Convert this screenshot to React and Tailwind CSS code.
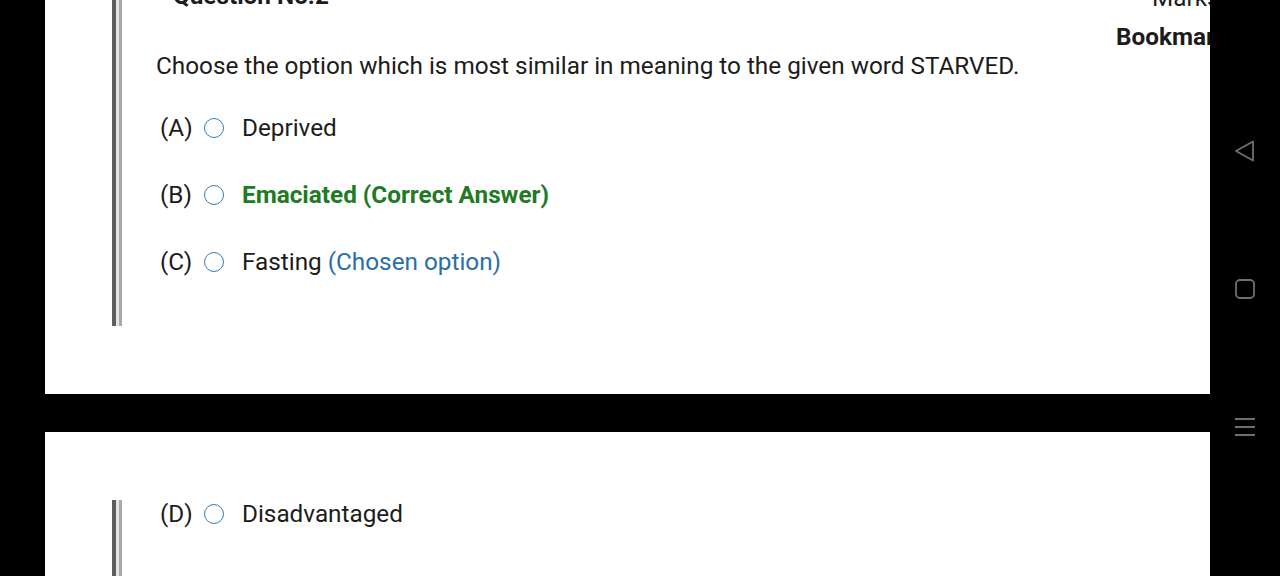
import React from "react";

const font = { fontFamily: "Roboto, 'Liberation Sans', sans-serif" };

function Radio() {
  return <span className="inline-block w-[20px] h-[20px] rounded-full border-[1.6px] border-[#3a7aad] shrink-0" />;
}

function Option({ label, children }) {
  return (
    <div className="flex items-center h-[28px] text-[24.3px] leading-[28px] text-[#1c1c1c]">
      <span className="w-[48px] pl-[4px]">{label}</span>
      <Radio />
      <span className="ml-[18px] whitespace-nowrap">{children}</span>
    </div>
  );
}

function Bar({ className }) {
  return (
    <div className={"flex shrink-0 " + className}>
      <div className="w-[4px] bg-[#5e5e5e]" />
      <div className="w-[3px] bg-[#e6e6e6]" />
      <div className="w-[3px] bg-[#a9a9a9]" />
    </div>
  );
}

export default function App() {
  return (
    <div className="w-[1280px] h-[576px] bg-black flex overflow-hidden" style={font}>
      <div className="w-[45px] shrink-0" />
      <div className="w-[1165px] shrink-0 flex flex-col">
        <div className="h-[394px] shrink-0 bg-white overflow-hidden flex">
          <div className="flex-1 flex">
            <div className="ml-[67px] flex h-[326px]">
              <Bar className="h-full" />
              <div className="pl-[34px] flex flex-col">
                <div className="mt-[-18px] ml-[17px] h-[28px] text-[24.3px] leading-[28px] font-bold text-[#1c1c1c] whitespace-nowrap">
                  Question No.2
                </div>
                <div className="mt-[42px] h-[28px] text-[24.3px] leading-[28px] text-[#1c1c1c] whitespace-nowrap">
                  Choose the option which is most similar in meaning to the given word STARVED.
                </div>
                <div className="mt-[34px] flex flex-col gap-[39px]">
                  <Option label="(A)">Deprived</Option>
                  <Option label="(B)">
                    <span className="font-bold text-[#217a24]">Emaciated (Correct Answer)</span>
                  </Option>
                  <Option label="(C)">
                    Fasting <span className="text-[#2a6fa6]">(Chosen option)</span>
                  </Option>
                </div>
              </div>
            </div>
          </div>
          <div className="w-[94px] shrink-0 flex flex-col text-[24.3px] leading-[28px] text-[#1c1c1c] whitespace-nowrap">
            <div className="mt-[-16px] ml-[36px]">Marks</div>
            <div className="mt-[11px] font-bold">Bookmark</div>
          </div>
        </div>
        <div className="h-[38px] shrink-0" />
        <div className="flex-1 bg-white flex">
          <div className="ml-[67px] flex mt-[68px]">
            <Bar className="h-[80px]" />
            <div className="pl-[34px]">
              <Option label="(D)">Disadvantaged</Option>
            </div>
          </div>
        </div>
      </div>
      <div className="w-[70px] shrink-0 flex flex-col items-center pt-[139px]">
        <svg width="24" height="24" viewBox="0 0 24 24" fill="none" stroke="#6f6f6f" strokeWidth="1.8" strokeLinejoin="round">
          <path d="M20 2.5 L20 21.5 L3 12 Z" />
        </svg>
        <svg className="mt-[115px]" width="22" height="22" viewBox="0 0 22 22" fill="none" stroke="#6f6f6f" strokeWidth="1.8">
          <rect x="2" y="2" width="18" height="18" rx="4" />
        </svg>
        <svg className="mt-[116px]" width="22" height="22" viewBox="0 0 22 22" fill="none" stroke="#6f6f6f" strokeWidth="1.8">
          <path d="M1 3h20M1 11h20M1 19h20" />
        </svg>
      </div>
    </div>
  );
}
